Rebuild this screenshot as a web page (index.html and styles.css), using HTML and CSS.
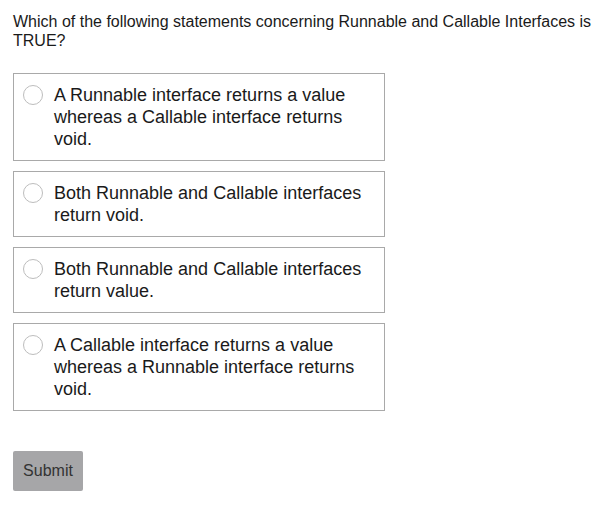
FILE: index.html
```html
<!DOCTYPE html>
<html>
<head>
<meta charset="utf-8">
<link rel="stylesheet" href="styles.css">
</head>
<body>
<div class="quiz">
  <p class="question">Which of the following statements concerning Runnable and Callable Interfaces is TRUE?</p>
  <div class="options">
    <label class="option"><span class="radio"></span><span class="text">A Runnable interface returns a value whereas a Callable interface returns void.</span></label>
    <label class="option"><span class="radio"></span><span class="text">Both Runnable and Callable interfaces return void.</span></label>
    <label class="option"><span class="radio"></span><span class="text">Both Runnable and Callable interfaces return value.</span></label>
    <label class="option"><span class="radio"></span><span class="text">A Callable interface returns a value whereas a Runnable interface returns void.</span></label>
  </div>
  <button class="submit">Submit</button>
</div>
</body>
</html>
```
FILE: styles.css
```css
body {
  margin: 0;
  font-family: "Liberation Sans", Arial, sans-serif;
  color: #1a1a1a;
  background: #fff;
}
.quiz {
  padding: 12px 13px;
}
.question {
  margin: 0 0 23px;
  font-size: 16px;
  line-height: 19px;
}
.options {
  display: flex;
  flex-direction: column;
  gap: 10px;
  width: 372px;
}
.option {
  display: flex;
  align-items: flex-start;
  border: 1px solid #a9a9a9;
  padding: 10px 20px 10px 9px;
  font-size: 18px;
  line-height: 22px;
}
.radio {
  flex: none;
  width: 18px;
  height: 18px;
  border: 1px solid #bdbdbd;
  border-radius: 50%;
  margin: 1px 11px 0 0;
}
.text {
  flex: 1;
}
.submit {
  margin-top: 40px;
  background: #a6a6a8;
  border: none;
  border-radius: 2px;
  color: #333;
  font-family: "Liberation Sans", Arial, sans-serif;
  font-size: 16px;
  padding: 0 10px;
  height: 40px;
  width: 70px;
}
```
